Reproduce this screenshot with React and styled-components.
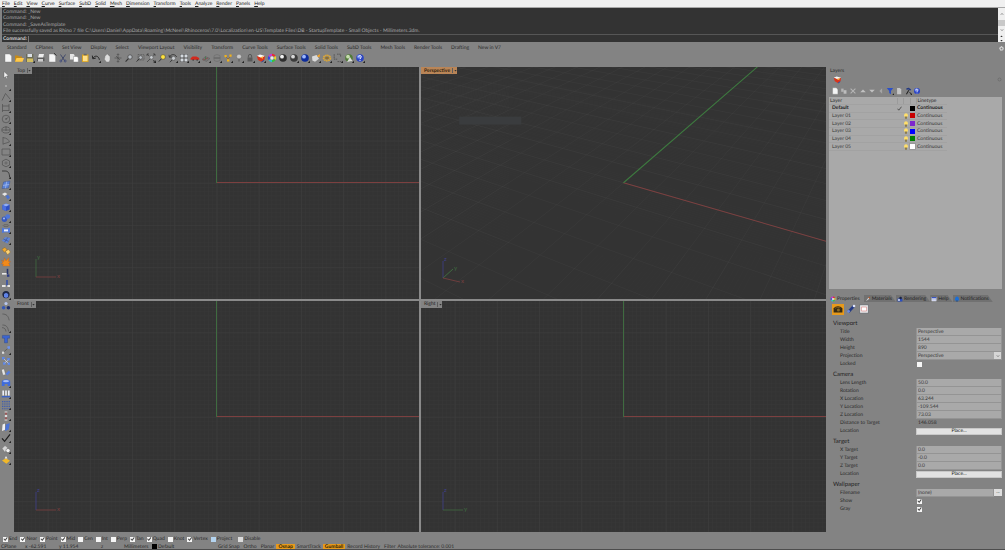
import React, { useId } from "react";
import styled, { createGlobalStyle, css } from "styled-components";

const Global = createGlobalStyle`
  * { box-sizing: border-box; }
  html, body { margin: 0; padding: 0; background: #838383; }
  body, button, input, select, table {
    font-family: Lato, "Liberation Sans", sans-serif;
    font-size: 5px;
    line-height: 6px;
    color: #2a2a2a;
    text-rendering: geometricPrecision;
  }
  button { border: 0; padding: 0; margin: 0; background: none; }
`;

/* ---------- page frame ---------- */

const Page = styled.div`
  display: flex;
  flex-direction: column;
  min-height: 100vh;
  background: #838383;
`;

const MenuBar = styled.nav`
  display: flex;
  gap: 4px;
  height: 8px;
  padding-left: 2px;
  background: #f0f0f0;
  border-bottom: 1px solid #a8a8a8;
`;

const MenuItem = styled.button`
  color: #202020;
  white-space: nowrap;
  &::first-letter { text-decoration: underline; }
`;

const CommandArea = styled.section`
  display: flex;
  background: #333;
  margin-left: 2px;
`;

const CommandText = styled.div`
  flex: 1;
  min-width: 0;
`;

const History = styled.div`
  display: grid;
  grid-template-rows: repeat(4, 1fr);
  align-items: center;
  height: 27px;
  padding: 1px 0 0 1px;
  border-bottom: 1px solid #565656;
  color: #a8a8a8;
  white-space: nowrap;
  overflow: hidden;
`;

const Prompt = styled.label`
  display: flex;
  align-items: center;
  height: 7px;
  padding-left: 1px;
  font-weight: 700;
  color: #d2d2d2;
`;

const PromptInput = styled.input`
  flex: 1;
  height: 6px;
  margin-left: 1px;
  padding: 0;
  border: 0;
  border-left: 1px solid #777;
  outline: 0;
  background: transparent;
  color: #ddd;
`;

const ScrollColumn = styled.div`
  display: flex;
  flex-direction: column;
  align-items: stretch;
  width: 7px;
  background: #efefef;
`;

const ScrollButton = styled.button`
  display: grid;
  place-items: center;
  flex: ${(p) => p.$grow || 1};
  color: #555;
`;

const ScrollThumb = styled.div`
  height: 6px;
  background: #c8c8c8;
`;

/* ---------- toolbars ---------- */

const TabStrip = styled.div`
  display: flex;
  align-items: center;
  gap: 9px;
  height: 10px;
  padding: 2px 1px 0 7px;
`;

const ToolTab = styled.button`
  white-space: nowrap;
  color: #2a2a2a;
`;

const GearButton = styled.button`
  display: grid;
  place-items: center;
  margin-left: auto;
  height: 6px;
`;

const ToolRow = styled.div`
  display: flex;
  align-items: flex-start;
  height: 15px;
  padding-left: 2px;
`;

const ToolColumn = styled.div`
  display: flex;
  flex-direction: column;
  width: 14px;
  flex: none;
  padding-top: 2px;
`;

const ToolButton = styled.button`
  display: grid;
  place-items: center;
  width: 11px;
  height: 11px;
  flex: none;
`;

const Workspace = styled.main`
  display: flex;
  flex: 1;
`;

/* ---------- viewports ---------- */

const ViewGrid = styled.div`
  flex: 1;
  min-width: 0;
  display: grid;
  grid-template-columns: 1fr 1fr;
  grid-template-rows: 1fr 1fr;
  gap: 2px;
  background: #8a8a8a;
`;

const View = styled.section`
  position: relative;
  background: #333;
  overflow: hidden;
`;

const Canvas = styled.svg`
  position: absolute;
  inset: 0;
  width: 100%;
  height: 100%;
`;

const Gizmo = styled.svg`
  position: absolute;
  left: 16px;
  bottom: 16px;
  width: 36px;
  height: 36px;
  overflow: visible;
  font-size: 6px;
`;

const ViewTitle = styled.button`
  position: absolute;
  left: 0;
  top: 0;
  display: flex;
  align-items: center;
  height: 7px;
  padding-left: 3px;
  gap: 2px;
  color: ${(p) => (p.$active ? "#2e1c0c" : "#222")};
  font-weight: ${(p) => (p.$active ? 700 : 400)};
  background: ${(p) => (p.$active ? "#b98557" : "#838383")};
`;

const TitleArrow = styled.span`
  display: grid;
  place-items: center;
  width: 5px;
  height: 5px;
  border-left: 1px solid #5c5c5c;
`;

/* ---------- side panels ---------- */

const Side = styled.aside`
  display: flex;
  flex-direction: column;
  flex: 0 0 179px;
  min-width: 0;
  padding: 0 3px 0 3px;
`;

const PanelTitle = styled.h2`
  margin: 0;
  padding: 1px 0 0 1px;
  height: 7px;
  font-size: 5px;
  font-weight: 400;
  line-height: 6px;
`;

const PanelIcons = styled.div`
  display: flex;
  align-items: center;
  justify-content: space-between;
  height: 10px;
  padding-left: 4px;
`;

const LayerTools = styled.div`
  display: flex;
  align-items: center;
  height: 13px;
  padding-left: 2px;
  & > button { width: 8px; margin-right: 1px; }
  & > button:nth-child(n + 4) { margin-right: 0; width: 9px; }
`;

const LayerList = styled.div`
  height: 192px;
  padding-top: 1px;
  background: #a9a9a9;
`;

const LayerTable = styled.table`
  width: 118px;
  height: 53px;
  table-layout: fixed;
  border-collapse: collapse;
  th { font-weight: 400; text-align: left; }
  th, td { padding: 0; line-height: 6px; border-bottom: 1px solid #a2a2a2; white-space: nowrap; }
  th:first-child { padding-left: 1px; }
  td:first-child { padding-left: 3px; }
  th + th { border-left: 1px solid #9b9b9b; }
  td:last-child, th:last-child { padding-left: 1px; }
`;

const LayerRow = styled.tr`
  font-weight: ${(p) => (p.$current ? 700 : 400)};
  color: ${(p) => (p.$current ? "#1c1c1c" : "#383838")};
`;

const Swatch = styled.span`
  display: block;
  width: 5px;
  height: 5px;
  background: ${(p) => p.$color};
  outline: ${(p) => (p.$framed ? "1px solid #999" : "none")};
`;

const PanelTabs = styled.div`
  display: flex;
  align-items: center;
  height: 9px;
  margin-top: 5px;
`;

const PanelTab = styled.button`
  display: flex;
  align-items: center;
  gap: 1px;
  height: 7px;
  padding: 0 4px 0 1px;
  white-space: nowrap;
  color: #222;
  background: ${(p) => (p.$active ? "transparent" : "#717171")};
  clip-path: polygon(0 0, calc(100% - 5px) 0, 100% 100%, 0 100%);
`;

const ModeRow = styled.div`
  display: flex;
  align-items: center;
  gap: 1px;
  height: 12px;
  margin-bottom: 3px;
  padding-left: 3px;
`;

const ModeButton = styled.button`
  display: grid;
  place-items: center;
  width: 12px;
  height: 11px;
  background: ${(p) => (p.$active ? "#e79a1c" : "transparent")};
`;

const Group = styled.fieldset`
  margin: 0;
  padding: 0;
  border: 0;
  min-width: 0;
  & + & { margin-top: 1px; }
`;

const GroupTitle = styled.legend`
  padding: 2px 0 0 4px;
  height: 10px;
  font-size: 6px;
  line-height: 7px;
  color: #242424;
`;

const Field = styled.div`
  display: grid;
  grid-template-columns: 76px 1fr;
  align-items: center;
  height: 8px;
  padding-left: 11px;
`;

const fieldBox = css`
  width: 100%;
  height: 8px;
  margin: 0;
  padding: 0 1px;
  border: 1px solid #949494;
  border-top-width: 0;
  border-radius: 0;
  outline: 0;
  background: #a9a9a9;
  color: #343434;
`;

const TextBox = styled.input`${fieldBox}`;

const SelectWrap = styled.div`
  position: relative;
  display: flex;
`;

const SelectBox = styled.select`
  ${fieldBox}
  appearance: none;
`;

const SelectArrow = styled.span`
  position: absolute;
  right: 1px;
  top: 0;
  display: grid;
  place-items: center;
  width: 7px;
  height: 7px;
  background: #d6d6d6;
  pointer-events: none;
`;

const FileWrap = styled.div`
  display: flex;
`;

const SmallButton = styled.button`
  width: 8px;
  height: 7px;
  flex: none;
  line-height: 5px;
  background: #dedede;
`;

const PlaceButton = styled.button`
  height: 7px;
  width: 100%;
  background: #e2e2e2;
  border: 1px solid #c8c8c8;
  line-height: 5px;
  color: #111;
`;

const ReadOnly = styled.output`
  padding-left: 2px;
`;

const Tick = styled.input.attrs({ type: "checkbox" })`
  appearance: none;
  display: grid;
  place-items: center;
  width: 5px;
  height: 5px;
  margin: 0 0 0 ${(p) => (p.$inset ? "1px" : "0")};
  background: ${(p) => p.$tone || "#f6f6f6"};
  &:checked::after {
    content: "";
    width: 5px;
    height: 5px;
    background: #444;
    clip-path: polygon(8% 50%, 22% 38%, 42% 62%, 80% 12%, 94% 24%, 44% 90%);
  }
`;

/* ---------- bottom bars ---------- */

const SnapBar = styled.div`
  display: flex;
  align-items: center;
  gap: 3px;
  height: 12px;
  padding: 2px 0 0 3px;
`;

const SnapItem = styled.label`
  display: flex;
  align-items: center;
  gap: 1px;
  white-space: nowrap;
  margin-right: ${(p) => (p.$last ? "3px" : "0")};
`;

const StatusBar = styled.footer`
  display: flex;
  height: 6px;
  padding-left: 1px;
  white-space: nowrap;
  overflow: hidden;
  border-bottom: 1px solid #4d4d4d;
`;

const Readout = styled.span`
  display: flex;
  gap: 1px;
  flex: none;
  width: ${(p) => p.$w}px;
`;

const StatusToggle = styled.button`
  flex: none;
  height: 6px;
  padding: 0 2px;
  font-weight: ${(p) => (p.$on ? 700 : 400)};
  color: ${(p) => (p.$on ? "#2b1d05" : "#2a2a2a")};
  background: ${(p) => (p.$on ? "#e79a1c" : "transparent")};
`;

/* ---------- icons, drawn on a 10 x 10 field ---------- */

const page = <path d="M2 1h4.6l2 2v6H2z" fill="#f5f5f5" stroke="#777" strokeWidth=".4" />;
const ball = (a, b) => (
  <>
    <circle cx="5" cy="5" r="3.8" fill={b} />
    <circle cx="4" cy="3.7" r="1.9" fill={a} />
  </>
);
const hollow = (d) => <path d={d} fill="none" stroke="#505050" strokeWidth=".7" />;

const art = {
  page,
  open: <><path d="M1 2.5h3l1 1h3v5H1z" fill="#c58a18" /><path d="M2.5 5H10L8.5 8.7H1z" fill="#ffc94a" /></>,
  save: <><path d="M1 1h7.5v8H1z" fill="#6c6c58" /><path d="M2.5 1h4.5v3H2.5z" fill="#d9dfe6" /><path d="M2 5.5h6V9H2z" fill="#d0bd62" /></>,
  print: <><path d="M3 1h5L7 5H2z" fill="#eee" /><path d="M1 4.5h7.5V8H1z" fill="#5c5c5c" /><path d="M2 6h5v2.6H2z" fill="#ccc" /></>,
  doc: <>{page}<path d="M7 0l2.5 2.5" stroke="#333" strokeWidth=".9" /></>,
  cut: <><path d="M2.5 1.5l4 6M7.5 1.5l-4 6" stroke="#3b4468" strokeWidth=".9" /><circle cx="2.8" cy="8" r="1" fill="none" stroke="#33407a" strokeWidth=".7" /><circle cx="7.2" cy="8" r="1" fill="none" stroke="#33407a" strokeWidth=".7" /></>,
  copy: <><path d="M1 1h3.5l1 1v4.5H1z" fill="#e5e5e5" /><path d="M4.5 3.5H8l1.3 1.3V9H4.5z" fill="#fff" stroke="#777" strokeWidth=".4" /></>,
  paste: <><path d="M2 1.5h6.5V9H2z" fill="#d9a321" /><path d="M3 2.7h4.5v5.5H3z" fill="#ffe08a" /><path d="M3.7.8h3v1.5h-3z" fill="#666" /></>,
  undo: <path d="M2 5.2C4 2 7.6 2.6 8.4 6.8M1.3 2.6l.5 3.2 3-.7" fill="none" stroke="#262626" strokeWidth="1" />,
  pan: <path d="M3 4V2.5h1V1.4h1V1h1v1h1v1h1v4L7 9H4.4L2.4 6.2z" fill="#ddd" stroke="#777" strokeWidth=".4" />,
  rotate: <path d="M5 1v8M1.5 5h7M3 3l4 4M3.8 2L5 .7 6.2 2M3.8 8L5 9.3 6.2 8" fill="none" stroke="#444" strokeWidth=".6" />,
  zoom: <><circle cx="6" cy="4" r="2.2" fill="#b9bec4" stroke="#444" strokeWidth=".7" /><path d="M4.4 5.6L1.6 8.6" stroke="#333" strokeWidth="1.1" /></>,
  zoomWin: <><path d="M3 1.5h6v5.5H3z" fill="none" stroke="#555" strokeWidth=".7" strokeDasharray="1 .6" /><circle cx="5.6" cy="4.5" r="1.8" fill="#b9bec4" stroke="#444" strokeWidth=".6" /><path d="M4.2 5.9L1.6 8.6" stroke="#333" strokeWidth="1" /></>,
  zoomExt: <><path d="M1 1l2 2M9 1L7.4 2.6M1 9l3-3M9 9L7 7M1 3V1h2M7 1h2v2M9 7v2H7" fill="none" stroke="#3a3a3a" strokeWidth=".7" /><circle cx="5.4" cy="4.4" r="1.8" fill="#c9cdd1" stroke="#444" strokeWidth=".5" /></>,
  zoomSel: <><circle cx="6" cy="4" r="2.4" fill="#ffe23e" stroke="#444" strokeWidth=".6" /><path d="M4.4 5.8L1.8 8.6" stroke="#333" strokeWidth="1" /></>,
  undoView: <><circle cx="5.5" cy="5.3" r="2" fill="#c9cdd1" stroke="#444" strokeWidth=".5" /><path d="M1.5 4C3 .8 7.4.8 8.6 4M1 1.8l.4 2.5 2.4-.4M4 7L2 9.2" fill="none" stroke="#2b2b2b" strokeWidth=".8" /></>,
  panes: <><path d="M1 1h8v8H1z" fill="#4e4e4e" /><path d="M1.5 1.5h3v3h-3zM5.5 1.5h3v3h-3zM1.5 5.5h3v3h-3zM5.5 5.5h3v3h-3z" fill="#d5dadf" /></>,
  car: <><path d="M.6 5.2l2-1.7h3.8L9.2 5v1.8H.6z" fill="#d3291d" /><path d="M2.5 7h1.4M6.5 7h1.4" stroke="#222" strokeWidth=".9" /></>,
  plane: <><path d="M1 6.5l3.5-3L9 5.5 5.5 8.4z" fill="#777" stroke="#5c5c5c" strokeWidth=".5" /><path d="M2 7l5-2" stroke="#8f4444" strokeWidth=".7" /><path d="M4.5 3.5v3" stroke="#3e7a45" strokeWidth=".7" /></>,
  dial: <><circle cx="5" cy="5" r="3.5" fill="none" stroke="#666" strokeWidth=".5" /><path d="M2 5h6" stroke="#505050" strokeWidth=".8" /></>,
  selection: <><path d="M1.5 2h2.2v2.2H1.5zM6.4 1.6h2.2v2.2H6.4zM4 6.2h2.4v2.4H4z" fill="#f1b31c" /><path d="M3 4l2 2 2-2" stroke="#a36a10" strokeWidth=".7" fill="none" /></>,
  bulb: <><circle cx="5" cy="3.6" r="2.4" fill="#c8c8c8" stroke="#666" strokeWidth=".4" /><path d="M4 5.8h2v2.8H4z" fill="#6c6c6c" /></>,
  lock: <><path d="M3.4 4.6V3a1.6 1.6 0 013.2 0v1.6" fill="none" stroke="#4d4d4d" strokeWidth=".8" /><path d="M2.5 4.5h5v4h-5z" fill="#5a5a5a" /></>,
  layers: <><path d="M.8 3L4 1.6 9 3 5.5 5z" fill="#f7f7f7" /><path d="M.8 3l4.7 2L9 3l-.6 4-3 1.8L2 7z" fill="#d8341c" /><path d="M4 4.4l3-1.2v2.6z" fill="#ffb23e" /><path d="M5.5 9L8 7.4" stroke="#2b4aa5" strokeWidth="1" /></>,
  wheel: <>{["#e83030", "#e8d52c", "#38c538", "#2bc3d6", "#3745e0", "#c637d2"].map((c, i) => (<path key={c} d="M5 1.8A3.2 3.2 0 017.8 3.4" transform={`rotate(${i * 60} 5 5)`} fill="none" stroke={c} strokeWidth="2" />))}<circle cx="5" cy="5" r="1.7" fill="#e9e9e9" /></>,
  sphere: ball("#f2f2f2", "#2f2f2f"),
  sphere2: ball("#d8d8d8", "#3c3c3c"),
  blueSphere: ball("#9cb8ff", "#0d2c9c"),
  spot: <><path d="M1 3.4L5.6 2 8 5.8 4 8.8 1.4 7.6z" fill="#d9d9d9" /><path d="M6 3l3-2-.6 3.6z" fill="#ffa61c" /></>,
  gears: <><ellipse cx="5" cy="5" rx="3.4" ry="2.6" fill="none" stroke="#e0a832" strokeWidth="1.8" strokeDasharray="1.5 .5" /><ellipse cx="5" cy="5" rx="1.8" ry="1.2" fill="#8f6f2c" /></>,
  dims: <path d="M1.2 1.2v5h3M4 1.2h3.6v3M4.5 8.6h4.4" fill="none" stroke="#454545" strokeWidth=".7" strokeDasharray="1.6 .6" />,
  grass: <>{ball("#c6dcae", "#517b37")}<path d="M3 9l3-5 2.5 4z" fill="#dcdcdc" /></>,
  help: <>{ball("#7b93f2", "#2a44c4")}<path d="M3.7 3.8c.1-1.8 2.8-1.6 2.6.1C6.2 5 5 5 5 6.2M5 7v1" fill="none" stroke="#fff" strokeWidth=".9" /></>,
  cursor: <path d="M3 1.5l4.5 4.3-2 .3 1 2.2-1 .5-1-2.2L3 8z" fill="#f4f4f4" stroke="#555" strokeWidth=".4" />,
  point: <circle cx="5" cy="5" r=".8" fill="#ccc" />,
  polyline: hollow("M1 8.5L4.5 1.5 9 7"),
  curvePts: hollow("M1.5 1v8M1.5 3H8M8 1v7M1.5 7.5H8"),
  circle: <>{hollow("M5 1.2a3.8 3.8 0 100 7.6 3.8 3.8 0 000-7.6M5 5l2.3-1.6")}<circle cx="5" cy="5" r=".7" fill="#444" /></>,
  ellipse: <>{hollow("M5 2a4.2 3 0 100 6 4.2 3 0 000-6M1 5h8M5 1v5")}</>,
  arc: hollow("M2 1v7.5M2 1.6C6 2 8 4 8.4 6L2 8"),
  rect: hollow("M1 2h8v6H1z"),
  polygon: <>{hollow("M5 1.2L8.6 3v4L5 8.8 1.4 7V3z")}<circle cx="5" cy="5" r="1.1" fill="none" stroke="#555" strokeWidth=".6" /></>,
  fillet: <path d="M1 2h3.2C7 2 8.6 4 8.6 8.6" fill="none" stroke="#333" strokeWidth=".9" />,
  surface: <><path d="M2.6 2L9 1 7.6 8 1 8.6z" fill="#5b83d8" stroke="#324a88" strokeWidth=".4" /><path d="M2 5.4L8.2 4.5M5.8 1.5L4.4 8.3" stroke="#b5c9f5" strokeWidth=".6" /></>,
  extrude: <><path d="M1 3l3-1.6L6.4 3 3.6 5z" fill="#e6e6e6" /><path d="M4.6 5.2L7 3.8l2 2.6-2.4 2z" fill="#4c73ce" /></>,
  box: <><path d="M1.5 3L5 1.4l3.6 1.4v4.6L5 9 1.5 7.4z" fill="#2d4fc4" /><path d="M1.5 3L5 1.4l3.6 1.4L5 4.4z" fill="#93aeef" /><path d="M1.5 3L5 4.4V9L1.5 7.4z" fill="#4a6fe0" /></>,
  boolean: <><circle cx="3.4" cy="6.2" r="2.7" fill="#3658bd" /><circle cx="6.7" cy="3.6" r="2.4" fill="#4e76da" /><circle cx="3" cy="5.4" r="1" fill="#a6bdf4" /></>,
  project: <><ellipse cx="5" cy="1.6" rx="2.8" ry="1" fill="none" stroke="#555" strokeWidth=".6" /><path d="M1 3.6c2 1.4 6 1.4 8 0V9c-2-1-6-1-8 0z" fill="#4f78dc" /><path d="M3 5.4h4v2H3z" fill="#e8eefc" /></>,
  mesh: <><path d="M.8 5.8L4.4 2l5 1L6.6 8.4z" fill="#5e83d4" /><path d="M2.4 4l5.2 2.4M6.8 2.4L3.6 7.2" stroke="#2c3f78" strokeWidth=".5" fill="none" /></>,
  join: <><path d="M1 3.2L4 1.4l2 2.4-2.6 2.4z" fill="#f2a92c" stroke="#8a6016" strokeWidth=".4" /><path d="M4.4 5.4l3-2L9.4 6 6.6 8.8z" fill="#ffd477" stroke="#8a6016" strokeWidth=".4" /></>,
  explode: <path d="M.6 3l2.2 1.6L3.4.8l1.6 3L8 .6l-.4 3.8 2 .2-1.8 1.8L9 9H1.6l.8-1.8L.4 6.8l1.4-1.2z" fill="#f28a1a" stroke="#b85a10" strokeWidth=".3" />,
  trim: <><path d="M6.5.8V6" stroke="#27356b" strokeWidth="1.6" /><path d="M1 5h4.5v1.6H1z" fill="#e8e8e8" /><path d="M6 6.4h2.4v2.4H6z" fill="#2b3c86" /></>,
  split: <><path d="M6 1v5.4" stroke="#2e4dab" strokeWidth="1.5" /><path d="M1 6h3.6v2H1zM6.4 6H9v2H6.4z" fill="#e4e4e4" /></>,
  group: <><circle cx="5" cy="4.6" r="3.6" fill="#1e2746" /><path d="M3 4l2-1.2L7.2 4v3L5 8 3 7z" fill="#5f83e8" /></>,
  ungroup: <><circle cx="5" cy="2.6" r="1.6" fill="#b6c6ee" /><circle cx="2.6" cy="6.8" r="1.8" fill="#3458b6" /><circle cx="7.4" cy="6.8" r="1.8" fill="#1e2f6a" /></>,
  curve: hollow("M1.4 2c4 0 6 2 6.8 6.4"),
  curve2: <>{hollow("M1.4 2c4 0 5.4 2 6.2 6.4M1 4.6c3 .2 3.6 1.6 4 4")}</>,
  text: <path d="M1.4 1.4h7.2v2.8H6.5v4.6h-3V4.2H1.4z" fill="#3c64cf" stroke="#274389" strokeWidth=".4" />,
  move: <><path d="M2.4 7.4l5-4.6" stroke="#555" strokeWidth=".7" /><path d="M6.4 1.2h2.6v2.6H6.4z" fill="#6f93ec" /><path d="M1 6.6h2.2v2.2H1z" fill="#dcdcdc" /></>,
  copyObj: <><path d="M1 1h2.6v2.6H1zM6.2 2h2.6v2.6H6.2zM2 6.2h2.6v2.6H2zM6.6 6.4H9V9H6.6z" fill="#5e86e4" /><path d="M3 3l4.4 4.4M7.4 4L3.6 7" stroke="#d8e0f6" strokeWidth=".6" /></>,
  rotateObj: <><path d="M1 2h3v6H1z" fill="#e4e4e4" stroke="#555" strokeWidth=".4" transform="rotate(-15 3 5)" /><path d="M4.6 6.8l3.2-3.4 1.6 2-3 3z" fill="#567ddc" /></>,
  pipe: <><path d="M.8 3.4C2 1 8 1 9.2 3.4V8H6.6V6H3.6v2H.8z" fill="#3f6bdc" /><ellipse cx="5" cy="3.2" rx="3" ry="1.1" fill="#a7bef5" /></>,
  array: <><path d="M1.4 1.4h1.6v5H1.4zM4.2 1.4h1.6v5H4.2zM7 1.4h1.6v5H7z" fill="#eceff8" /><path d="M.8 7h8.4v1.4H.8z" fill="#3a61c6" /></>,
  gridPts: <path d="M1 1.6h8M1 4h8M1 6.4h8M1 8.8h8" stroke="#3c5cb0" strokeWidth="1.1" strokeDasharray="1.3 .9" />,
  spine: <><path d="M5 1v8" stroke="#a33" strokeWidth="1" /><path d="M3.6 1h2.8M3.6 9h2.8" stroke="#ddd" strokeWidth="1.2" /><circle cx="5" cy="5" r="1.3" fill="#ddd" /></>,
  align: <><path d="M1.6 2.6L4 1.4v6.4L1 9z" fill="#f0f0f0" /><path d="M5 2.4L8.8 1 7.6 7.6 4 9z" fill="#4a73d6" /></>,
  check: <path d="M1 5.4L3.6 8.4 9 1.4" fill="none" stroke="#1d1d1d" strokeWidth="1.2" />,
  shapes: <><path d="M1 4.4l3-2.8 2.6 2v3.2L3.6 8z" fill="#d5d5d5" stroke="#666" strokeWidth=".4" /><circle cx="7" cy="6.6" r="2.1" fill="#f2f2f2" stroke="#555" strokeWidth=".5" /></>,
  block: <><path d="M1 5.6L5 3.2l4 2.6-3.6 3z" fill="#f1b82a" /><path d="M5 1l1.6 2.4h-3z" fill="#e9e9e9" /></>,
  copyDim: <><path d="M1.5 2h3v4h-3z" fill="#b4b4b4" /><path d="M4.5 4h3.6v4.4H4.5z" fill="#bdbdbd" /></>,
  cross: <path d="M2 2l6 6M8 2L2 8" stroke="#b5b5b5" strokeWidth="1.3" />,
  up: <path d="M5 3l3.4 3.6H1.6z" fill="#c2c2c2" />,
  down: <path d="M5 7L1.6 3.4h6.8z" fill="#c2c2c2" />,
  back: <path d="M3 5l3.4-3.4v6.8z" fill="#a5a5a5" />,
  filter: <path d="M1 1.4h8L6.2 5v4L4 7.6V5z" fill="#2c50c8" />,
  sheet: <path d="M2.6 1.4h3.6l1.6 1.8V9H2.6z" fill="#c4c4c4" />,
  tools: <><path d="M3 9l3-5" stroke="#222" strokeWidth="1.3" /><path d="M3 1.6l3-.6 3 2.2-1.4 1.4L5.8 3 3 3.4z" fill="#253a80" /><path d="M7 6.4l2 2.4" stroke="#222" strokeWidth="1.2" /></>,
  camera: <><path d="M.6 4.4c2-3 6.8-3 8.8 0v4.2H.6z" fill="#352a14" /><circle cx="5.4" cy="6" r="1.5" fill="#8a6a26" /><path d="M2 4.4c1.6-1.2 4-1.2 5.4-.4" stroke="#b58222" strokeWidth=".5" fill="none" /></>,
  marker: <><path d="M2.4 8L7.8 2.2" stroke="#233a86" strokeWidth="2.6" /><circle cx="8" cy="2" r="1.3" fill="#dfe6fb" /><circle cx="2.6" cy="7.4" r="1.4" fill="#6c8be0" /></>,
  frame: <><path d="M.6.8h8.8v8.4H.6z" fill="#e9e9ea" stroke="#50555c" strokeWidth=".6" /><path d="M2.4 3h5.2v4H2.4z" fill="#fff" stroke="#d98d8d" strokeWidth=".7" /></>,
  brush: <><path d="M1.6 8.6l4-5.6 1.6 1.4z" fill="#e3e3e3" /><path d="M5.4 3L8.6.8 7.4 4.4z" fill="#c7541d" /></>,
  render: <><path d="M1 4h8v5H1z" fill="#2b4fc2" /><circle cx="6" cy="3.2" r="2.1" fill="#1a2346" /><path d="M1.8 5.4h3v2.4h-3z" fill="#eee" /></>,
  helpTab: <><path d="M1 1.6h8v7H1z" fill="#f0f2fa" /><path d="M1 1.6h8v2H1z" fill="#3a55bf" /><path d="M2.4 5h2M2.4 6.8h2M5.8 5h2M5.8 6.8h2" stroke="#4a5fc0" strokeWidth=".9" /></>,
  bell: <><path d="M1.2 7.6C2.4 6 1.2 1.2 5 1 8.8 1.2 7.6 6 8.8 7.6z" fill="#1a6fd8" /><circle cx="5" cy="8.4" r="1.3" fill="#14498e" /></>,
  yellowBulb: <><circle cx="5" cy="3.8" r="3.2" fill="#ffdf6b" /><path d="M3.4 6h3.2v3.6H3.4z" fill="#8a7a48" /></>,
  gear: <><circle cx="5" cy="5" r="3.4" fill="none" stroke="#dedede" strokeWidth="2.2" strokeDasharray="1.9 .8" /><circle cx="5" cy="5" r="2.6" fill="none" stroke="#dedede" strokeWidth="1.4" /></>,
  darkGear: <circle cx="5" cy="5" r="3" fill="none" stroke="#6a6a6a" strokeWidth="1.6" />,
  chevUp: <path d="M2 6.8L5 3.6l3 3.2" fill="none" stroke="#555" strokeWidth="1.6" />,
  chevDown: <path d="M2 3.4l3 3.2 3-3.2" fill="none" stroke="#555" strokeWidth="1.6" />,
  triUp: <path d="M5 2l4 5H1z" fill="#333" />,
  triDown: <path d="M5 8L1 3h8z" fill="#333" />,
};

function Icon({ name, size = 10, menu }) {
  return (
    <svg width={size} height={size} viewBox="0 0 10 10" aria-hidden="true" display="block">
      {art[name]}
      {menu && <path d="M10 7.8V10H7.8z" fill="#222" />}
    </svg>
  );
}

const topTools = [
  ["page"], ["open"], ["save", 1], ["print"], ["doc"], ["cut"], ["copy"], ["paste"], ["undo", 1], ["pan"],
  ["rotate"], ["zoom"], ["zoomWin"], ["zoomExt", 1], ["zoomSel"], ["undoView", 1], ["panes", 1], ["car", 1],
  ["plane", 1], ["dial", 1], ["selection", 1], ["bulb", 1], ["lock", 1], ["layers", 1], ["wheel"], ["sphere"],
  ["sphere2", 1], ["blueSphere", 1], ["spot", 1], ["gears", 1], ["dims", 1], ["grass", 1], ["help", 1],
];

const leftTools = [
  ["cursor"], ["point", 1], ["polyline", 1], ["curvePts", 1], ["circle", 1], ["ellipse", 1], ["arc", 1],
  ["rect", 1], ["polygon", 1], ["fillet", 1], ["surface", 1], ["extrude", 1], ["box", 1], ["boolean", 1],
  ["project", 1], ["mesh", 1], ["join"], ["explode"], ["trim"], ["split"], ["group", 1], ["ungroup"],
  ["curve"], ["curve2", 1], ["text"], ["move", 1], ["copyObj"], ["rotateObj"], ["pipe", 1], ["array", 1],
  ["gridPts", 1], ["spine", 1], ["align", 1], ["check", 1], ["shapes", 1], ["block", 1],
];

const layerTools = [
  ["page"], ["copyDim"], ["cross"], ["up"], ["down"], ["back"], ["filter", 1], ["sheet"], ["tools", 1], ["help"],
];

/* ---------- construction-plane drawing ---------- */

const GREEN = "#3f6b40";
const RED = "#7c4040";
const BLUE = "#40408c";

function PlaneCanvas() {
  const id = useId();
  const minor = `${id}minor`;
  const major = `${id}major`;
  return (
    <Canvas viewBox="-203 -116 406 232" preserveAspectRatio="xMidYMid slice">
      <defs>
        <pattern id={minor} width="4.23" height="4.23" patternUnits="userSpaceOnUse">
          <path d="M0 0H4.23M0 0V4.23" stroke="#393939" strokeWidth=".8" />
        </pattern>
        <pattern id={major} width="42.3" height="42.3" patternUnits="userSpaceOnUse">
          <path d="M0 0H42.3M0 0V42.3" stroke="#3e3e3e" strokeWidth="1" />
        </pattern>
      </defs>
      <rect x="-1000" y="-1000" width="2000" height="2000" fill={`url(#${minor})`} />
      <rect x="-1000" y="-1000" width="2000" height="2000" fill={`url(#${major})`} />
      <path d="M0 0H1000" stroke={RED} shapeRendering="crispEdges" />
      <path d="M0 0V-1000" stroke={GREEN} shapeRendering="crispEdges" />
    </Canvas>
  );
}

const CAMERA_DISTANCE = 146.06;
const FOCAL = 483;
const depthOf = ([x, y]) => CAMERA_DISTANCE - 0.433 * x + 0.75 * y;

function project([x, y]) {
  const k = FOCAL / depthOf([x, y]);
  return `${((0.866 * x + 0.5 * y) * k).toFixed(1)} ${((0.25 * x - 0.433 * y) * k).toFixed(1)}`;
}

function segment(a, b) {
  const near = 30;
  const da = depthOf(a);
  const db = depthOf(b);
  if (da < near && db < near) return "";
  const cut = () => {
    const t = (near - da) / (db - da);
    return [a[0] + (b[0] - a[0]) * t, a[1] + (b[1] - a[1]) * t];
  };
  return `M${project(da < near ? cut() : a)}L${project(db < near ? cut() : b)}`;
}

function gridPath(extent, step) {
  let d = "";
  for (let v = -extent; v <= extent; v += step) {
    d += segment([v, -extent], [v, extent]) + segment([-extent, v], [extent, v]);
  }
  return d;
}

const minorPath = gridPath(160, 1);
const majorPath = gridPath(400, 10);

function PerspectiveCanvas() {
  return (
    <Canvas viewBox="-202 -116 404 232" preserveAspectRatio="xMidYMid slice">
      <path d={minorPath} stroke="#fff" strokeOpacity=".02" strokeWidth=".6" />
      <path d={majorPath} stroke="#fff" strokeOpacity=".035" strokeWidth=".8" />
      <rect x="-164" y="-66" width="62" height="8" fill="#3a3c3e" />
      <path d={segment([0, 0], [200, 0])} stroke={RED} />
      <path d={segment([0, 0], [0, 400])} stroke="#3d7a3f" />
    </Canvas>
  );
}

function AxisGizmo({ up, right }) {
  const colors = { x: RED, y: GREEN, z: BLUE };
  return (
    <Gizmo viewBox="0 0 36 36">
      <path d="M6 30V12" stroke={colors[up]} strokeWidth=".8" />
      <path d="M6 30H26" stroke={colors[right]} strokeWidth=".8" />
      <text x="7" y="12" fill={colors[up]}>{up}</text>
      <text x="27" y="31" fill={colors[right]}>{right}</text>
    </Gizmo>
  );
}

function PerspectiveGizmo() {
  return (
    <Gizmo viewBox="0 0 36 36">
      <path d="M6 31V14" stroke={BLUE} strokeWidth=".8" />
      <path d="M6 31L16 22" stroke={GREEN} strokeWidth="1" />
      <path d="M6 31L23 35" stroke={RED} strokeWidth=".8" />
      <text x="7" y="14" fill={BLUE}>z</text>
      <text x="17" y="23" fill={GREEN}>y</text>
      <text x="24" y="36" fill={RED}>x</text>
    </Gizmo>
  );
}

function Viewport({ name, active, children }) {
  return (
    <View aria-label={name}>
      {children}
      <ViewTitle $active={active}>
        {name}
        <TitleArrow><Icon name="triDown" size={3} /></TitleArrow>
      </ViewTitle>
    </View>
  );
}

/* ---------- data ---------- */

const menus = ["File", "Edit", "View", "Curve", "Surface", "SubD", "Solid", "Mesh", "Dimension", "Transform", "Tools", "Analyze", "Render", "Panels", "Help"];
const toolTabs = ["Standard", "CPlanes", "Set View", "Display", "Select", "Viewport Layout", "Visibility", "Transform", "Curve Tools", "Surface Tools", "Solid Tools", "SubD Tools", "Mesh Tools", "Render Tools", "Drafting", "New in V7"];
const history = [
  "Command: _New",
  "Command: _New",
  "Command: _SaveAsTemplate",
  "File successfully saved as Rhino 7 file C:\\Users\\Daniel\\AppData\\Roaming\\McNeel\\Rhinoceros\\7.0\\Localization\\en-US\\Template Files\\DB - StartupTemplate - Small Objects - Millimeters.3dm.",
];
const layers = [
  ["Default", "#000", true],
  ["Layer 01", "#c80000"],
  ["Layer 02", "#7d26cd"],
  ["Layer 03", "#0000ff"],
  ["Layer 04", "#007f00"],
  ["Layer 05", "#fff"],
];
const panelTabs = [["Properties", "wheel"], ["Materials", "brush"], ["Rendering", "render"], ["Help", "helpTab"], ["Notifications", "bell"]];
const groups = [
  ["Viewport", [["Title", "text", "Perspective"], ["Width", "text", "1544"], ["Height", "text", "890"], ["Projection", "select", "Perspective"], ["Locked", "check", false]]],
  ["Camera", [["Lens Length", "text", "50.0"], ["Rotation", "text", "0.0"], ["X Location", "text", "63.244"], ["Y Location", "text", "-109.544"], ["Z Location", "text", "73.03"], ["Distance to Target", "output", "146.058"], ["Location", "button", "Place..."]]],
  ["Target", [["X Target", "text", "0.0"], ["Y Target", "text", "-0.0"], ["Z Target", "text", "0.0"], ["Location", "button", "Place..."]]],
  ["Wallpaper", [["Filename", "file", "(none)"], ["Show", "check", true], ["Gray", "check", true]]],
];
const snaps = [["End", 1], ["Near", 1], ["Point", 1], ["Mid", 1], ["Cen", 0], ["Int", 0], ["Perp", 0], ["Tan", 1], ["Quad", 1], ["Knot", 0], ["Vertex", 1], ["Project", 0, "#b4d4f0"], ["Disable", 0, "#dcdcdc"]];
const toggles = [["Grid Snap"], ["Ortho"], ["Planar"], ["Osnap", 1], ["SmartTrack"], ["Gumball", 1], ["Record History"], ["Filter"]];

function PropertyField({ label, kind, value }) {
  const id = useId();
  return (
    <Field>
      <label htmlFor={id}>{label}</label>
      {kind === "text" && <TextBox id={id} defaultValue={value} />}
      {kind === "select" && (
        <SelectWrap>
          <SelectBox id={id}><option>{value}</option></SelectBox>
          <SelectArrow><Icon name="chevDown" size={4} /></SelectArrow>
        </SelectWrap>
      )}
      {kind === "check" && <Tick id={id} $inset defaultChecked={value} />}
      {kind === "output" && <ReadOnly id={id}>{value}</ReadOnly>}
      {kind === "button" && <PlaceButton id={id}>{value}</PlaceButton>}
      {kind === "file" && (
        <FileWrap>
          <TextBox id={id} defaultValue={value} />
          <SmallButton aria-label="Browse">...</SmallButton>
        </FileWrap>
      )}
    </Field>
  );
}

function LayersPanel() {
  return (
    <>
      <PanelTitle>Layers</PanelTitle>
      <PanelIcons>
        <Icon name="layers" size={9} />
        <Icon name="darkGear" size={5} />
      </PanelIcons>
      <LayerTools>
        {layerTools.map(([n, m]) => (
          <ToolButton key={n} aria-label={n}><Icon name={n} size={8} menu={m} /></ToolButton>
        ))}
      </LayerTools>
      <LayerList>
        <LayerTable>
          <colgroup>
            <col style={{ width: 68 }} /><col style={{ width: 6 }} /><col style={{ width: 7 }} /><col style={{ width: 6 }} /><col />
          </colgroup>
          <thead>
            <tr><th>Layer</th><th /><th /><th /><th>Linetype</th></tr>
          </thead>
          <tbody>
            {layers.map(([name, color, current]) => (
              <LayerRow key={name} $current={current}>
                <td>{name}</td>
                <td>{current && <Icon name="check" size={5} />}</td>
                <td>{!current && <Icon name="yellowBulb" size={6} />}</td>
                <td><Swatch $color={color} $framed={color === "#fff"} /></td>
                <td>Continuous</td>
              </LayerRow>
            ))}
          </tbody>
        </LayerTable>
      </LayerList>
    </>
  );
}

export default function App() {
  return (
    <Page>
      <Global />
      <MenuBar>{menus.map((m) => <MenuItem key={m}>{m}</MenuItem>)}</MenuBar>
      <CommandArea>
        <CommandText>
          <History>{history.map((line, i) => <span key={i}>{line}</span>)}</History>
          <Prompt>Command:<PromptInput /></Prompt>
        </CommandText>
        <ScrollColumn>
          <ScrollButton $grow={3} aria-label="Scroll up"><Icon name="chevUp" size={4} /></ScrollButton>
          <ScrollThumb />
          <ScrollButton $grow={2} aria-label="Scroll down"><Icon name="chevDown" size={4} /></ScrollButton>
          <ScrollButton aria-label="Previous"><Icon name="triUp" size={3} /></ScrollButton>
          <ScrollButton aria-label="Next"><Icon name="triDown" size={3} /></ScrollButton>
        </ScrollColumn>
      </CommandArea>
      <TabStrip>
        {toolTabs.map((t) => <ToolTab key={t}>{t}</ToolTab>)}
        <GearButton aria-label="Toolbar options"><Icon name="gear" size={5} /></GearButton>
      </TabStrip>
      <ToolRow>
        {topTools.map(([n, m]) => <ToolButton key={n} aria-label={n}><Icon name={n} menu={m} /></ToolButton>)}
      </ToolRow>
      <Workspace>
        <ToolColumn>
          {leftTools.map(([n, m]) => <ToolButton key={n} aria-label={n}><Icon name={n} menu={m} /></ToolButton>)}
        </ToolColumn>
        <ViewGrid>
          <Viewport name="Top"><PlaneCanvas /><AxisGizmo up="y" right="x" /></Viewport>
          <Viewport name="Perspective" active><PerspectiveCanvas /><PerspectiveGizmo /></Viewport>
          <Viewport name="Front"><PlaneCanvas /><AxisGizmo up="z" right="x" /></Viewport>
          <Viewport name="Right"><PlaneCanvas /><AxisGizmo up="z" right="y" /></Viewport>
        </ViewGrid>
        <Side>
          <LayersPanel />
          <PanelTabs>
            {panelTabs.map(([label, icon], i) => (
              <PanelTab key={label} $active={i === 0}><Icon name={icon} size={6} />{label}</PanelTab>
            ))}
          </PanelTabs>
          <ModeRow>
            <ModeButton $active aria-label="Viewport properties"><Icon name="camera" /></ModeButton>
            <ModeButton aria-label="Material"><Icon name="marker" size={10} /></ModeButton>
            <ModeButton aria-label="Frame"><Icon name="frame" size={10} /></ModeButton>
          </ModeRow>
          {groups.map(([title, fields]) => (
            <Group key={title}>
              <GroupTitle>{title}</GroupTitle>
              {fields.map(([label, kind, value]) => (
                <PropertyField key={label} label={label} kind={kind} value={value} />
              ))}
            </Group>
          ))}
        </Side>
      </Workspace>
      <SnapBar>
        {snaps.map(([label, on, tone]) => (
          <SnapItem key={label} $last={label === "Project"}>
            <Tick defaultChecked={!!on} $tone={tone} />
            {label}
          </SnapItem>
        ))}
      </SnapBar>
      <StatusBar>
        <Readout $w={24}>CPlane</Readout>
        <Readout $w={34}>x -62.591</Readout>
        <Readout $w={42}>y 11.954</Readout>
        <Readout $w={23}>z</Readout>
        <Readout $w={28}>Millimeters</Readout>
        <Readout $w={64}><Swatch $color="#000" />Default</Readout>
        {toggles.map(([label, on]) => <StatusToggle key={label} $on={on}>{label}</StatusToggle>)}
        <Readout $w={60}>Absolute tolerance: 0.001</Readout>
      </StatusBar>
    </Page>
  );
}
